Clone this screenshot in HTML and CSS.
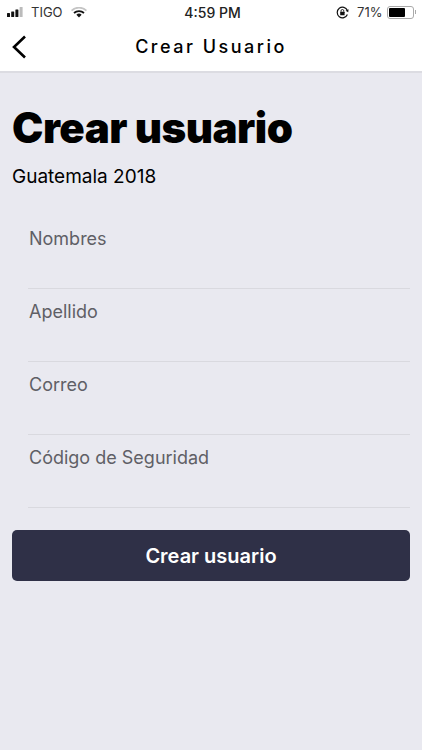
FILE: index.html
```html
<!DOCTYPE html>
<html lang="en">
<head>
    <meta charset="UTF-8">
    <meta name="viewport" content="width=device-width, initial-scale=1.0">
    <title>Crear Usuario</title>
    <link rel="stylesheet" href="styles.css">
</head>
<body>

    <!-- Status bar -->
    <div class="status-bar">
        <div class="status-left">
            <svg class="signal" width="17" height="10" viewBox="0 0 17 10">
                <rect x="0" y="6" width="3" height="4" rx="0.5" fill="#111"/>
                <rect x="4.2" y="4.5" width="3" height="5.5" rx="0.5" fill="#111"/>
                <rect x="8.4" y="2.5" width="3" height="7.5" rx="0.5" fill="#111"/>
                <rect x="12.6" y="0" width="3" height="10" rx="0.5" fill="#bbb"/>
            </svg>
            <span>TIGO</span>
            <svg class="wifi" width="16" height="11" viewBox="0 0 16 11">
                <path d="M0.5 3.6 A11 11 0 0 1 15.5 3.6" fill="none" stroke="#c4c4c4" stroke-width="1.7"/>
                <path d="M3 6 A7.4 7.4 0 0 1 13 6" fill="none" stroke="#111" stroke-width="1.8"/>
                <path d="M8 10.6 L5.4 7.8 A3.8 3.8 0 0 1 10.6 7.8 Z" fill="#111"/>
            </svg>
        </div>
        <div class="status-time">4:59 PM</div>
        <div class="status-right">
            <svg class="lock" width="13" height="13" viewBox="0 0 13 13">
                <path d="M11.4 8.6 A5.3 5.3 0 1 1 11.4 4.4" fill="none" stroke="#111" stroke-width="1.2"/>
                <path d="M12.6 3.2 L12.2 6.2 L9.6 4.8 Z" fill="#111"/>
                <rect x="4.2" y="5.8" width="4.4" height="3.4" rx="0.5" fill="#111"/>
                <path d="M5 5.8 V4.9 A1.4 1.4 0 0 1 7.8 4.9 V5.8" fill="none" stroke="#111" stroke-width="0.9"/>
            </svg>
            <span>71%</span>
            <div class="battery"><div class="battery-level"></div></div>
            <div class="battery-tip"></div>
        </div>
    </div>

    <!-- Nav bar -->
    <div class="nav-bar">
        <svg class="back" width="16" height="24" viewBox="0 0 16 24">
            <path d="M14 1.5 L3 12 L14 22.5" fill="none" stroke="#000" stroke-width="2.6"/>
        </svg>
        <div class="nav-title">Crear Usuario</div>
    </div>

    <div class="content">
        <h1>Crear usuario</h1>
        <p class="subtitle">Guatemala 2018</p>

        <form class="form">
            <div class="field">Nombres</div>
            <div class="field">Apellido</div>
            <div class="field">Correo</div>
            <div class="field">Código de Seguridad</div>
        </form>

        <button class="submit-btn" type="button">Crear usuario</button>
    </div>

</body>
</html>
```

FILE: styles.css
```css
html, body {
    margin: 0;
    height: 100%;
}

body {
    width: 422px;
    height: 750px;
    overflow: hidden;
    font-family: 'Inter', 'Liberation Sans', sans-serif;
    background-color: #e9e9f0;
    color: #000000;
}

.status-bar {
    position: relative;
    display: flex;
    justify-content: space-between;
    align-items: center;
    height: 24px;
    padding: 0 6px 0 7px;
    background-color: #ffffff;
    font-size: 13px;
    color: #222222;
}

.status-left, .status-right {
    display: flex;
    align-items: center;
}

.status-left span {
    margin-left: 7px;
    color: #333333;
}

.wifi {
    margin-left: 8px;
}

.status-time {
    position: absolute;
    left: 3px;
    right: 0;
    text-align: center;
    pointer-events: none;
    font-size: 14px;
    font-weight: 500;
}

.status-right span {
    margin-left: 8px;
    color: #333333;
}

.battery {
    width: 27px;
    height: 13px;
    margin-left: 4px;
    padding: 1px;
    border: 1px solid #aaaaaa;
    border-radius: 3px;
    box-sizing: border-box;
}

.battery-level {
    width: 71%;
    height: 100%;
    background-color: #000000;
    border-radius: 1px;
}

.battery-tip {
    width: 1.5px;
    height: 4px;
    margin-left: 1px;
    background-color: #aaaaaa;
}

.nav-bar {
    position: relative;
    display: flex;
    align-items: center;
    justify-content: center;
    height: 49px;
    padding-bottom: 2px;
    box-sizing: border-box;
    background-color: #ffffff;
    border-bottom: 2px solid #dcdce2;
}

.back {
    position: absolute;
    left: 11px;
    top: 11px;
}

.nav-title {
    font-size: 18px;
    font-weight: 500;
    letter-spacing: 2.5px;
}

.content {
    padding: 0 12px;
}

h1 {
    margin: 30px 0 0;
    font-size: 42px;
    line-height: 50px;
    font-weight: 900;
    letter-spacing: -0.5px;
}

.subtitle {
    margin: 12px 0 0;
    font-size: 19px;
    line-height: 24px;
}

.form {
    margin-top: 28px;
}

.field {
    height: 72px;
    margin-left: 16px;
    margin-bottom: 1px;
    padding-top: 10px;
    padding-left: 1px;
    box-sizing: border-box;
    font-size: 18px;
    line-height: 24px;
    color: #5f5f66;
    border-bottom: 1px solid #d9d9df;
}

.submit-btn {
    display: block;
    width: 100%;
    height: 51px;
    margin-top: 22px;
    border: none;
    border-radius: 5px;
    background-color: #2f3047;
    color: #ffffff;
    font-family: inherit;
    font-size: 20px;
    font-weight: 600;
}
```
